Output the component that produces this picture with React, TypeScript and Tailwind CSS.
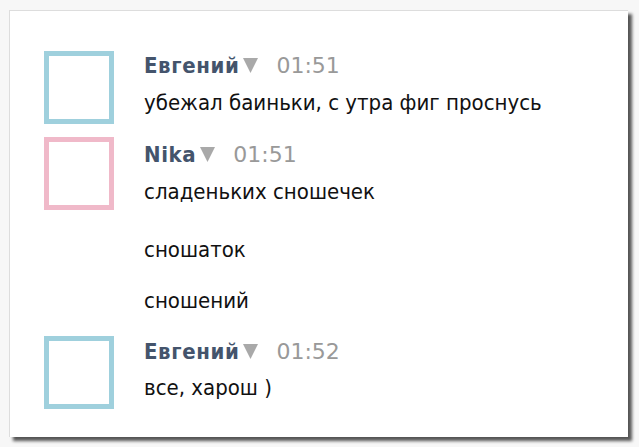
const avatarBlue = 'border-[#9fd0dd]'

function Header({ name, time }: { name: string; time: string }) {
  return (
    <div className="flex items-center h-[28px]">
      <span className="font-bold tracking-[0.6px] text-[#44546c]">{name}</span>
      <svg width="15" height="15" viewBox="0 0 15 15" className="ml-[4px] mt-[1px]">
        <polygon points="0,0 15,0 7.5,15" fill="#a9a9a9" />
      </svg>
      <span className="ml-[18px] font-['DejaVu_Sans',sans-serif] text-[#999999]">{time}</span>
    </div>
  )
}

function Avatar({ color }: { color: string }) {
  return <div className={`w-[70px] h-[73px] shrink-0 border-[5px] bg-white ${color}`} />
}

export default function App() {
  return (
    <div className="w-[639px] h-[447px] bg-[#f7f7f7] pt-[10px] pl-[9px] font-['DejaVu_Sans_Condensed','DejaVu_Sans',sans-serif] text-[22px] text-[#111]">
      <div className="w-[619px] h-[427px] bg-white border-t border-l border-[#dddddd] shadow-[4px_4px_3px_rgba(0,0,0,0.65)] pt-[40px] pl-[34px] flex flex-col">
        <div className="flex gap-[30px]">
          <Avatar color={avatarBlue} />
          <div className="flex flex-col">
            <Header name="Евгений" time="01:51" />
            <p className="leading-[34px] mt-[7px]">убежал баиньки, с утра фиг проснусь</p>
          </div>
        </div>

        <div className="flex gap-[30px] mt-[13px]">
          <Avatar color="border-[#f0b9c9]" />
          <div className="flex flex-col pt-[3px]">
            <Header name="Nika" time="01:51" />
            <p className="leading-[34px] mt-[7px]">сладеньких сношечек</p>
            <p className="leading-[34px] mt-[24px]">сношаток</p>
            <p className="leading-[34px] mt-[17px]">сношений</p>
          </div>
        </div>

        <div className="flex gap-[30px] mt-[18px]">
          <Avatar color={avatarBlue} />
          <div className="flex flex-col pt-[1px]">
            <Header name="Евгений" time="01:52" />
            <p className="leading-[34px] mt-[6px]">все, харош )</p>
          </div>
        </div>
      </div>
    </div>
  )
}
